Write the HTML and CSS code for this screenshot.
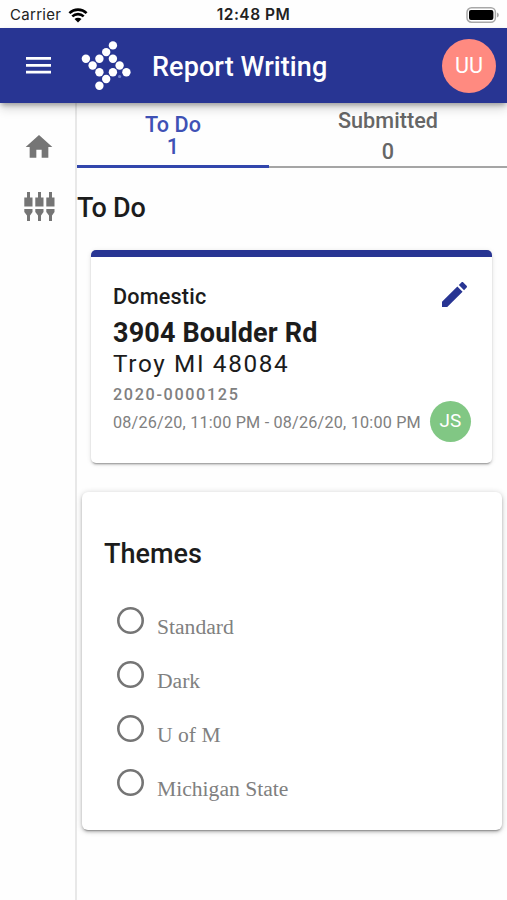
FILE: index.html
```
<!DOCTYPE html>
<html lang="en">

<head>
  <meta charset="utf-8">
  <title>Report Writing</title>
  <link rel="stylesheet" href="styles.css">
</head>

<body>
  <div class="status-bar">
    <div class="carrier">
      <span>Carrier</span>
      <svg class="wifi" viewBox="0 0 20 15" width="20" height="15">
        <path d="M1.4 5.1a12.4 12.4 0 0 1 17.2 0M4.3 8.4a8.2 8.2 0 0 1 11.4 0" fill="none" stroke="#000" stroke-width="2.6" />
        <path d="M10 14.6 6.5 11.1a5 5 0 0 1 7 0z" />
      </svg>
    </div>
    <div class="time">12:48 PM</div>
    <svg class="battery" viewBox="0 0 34 16" width="34" height="16">
      <rect x="1" y="0.8" width="28.4" height="14.4" rx="4.5" fill="#fff" stroke="#a8a8a8" stroke-width="1.5" />
      <rect x="3" y="3" width="24.4" height="10" rx="2" />
      <path d="M31 5.5a2.6 2.6 0 0 1 0 5z" fill="#a8a8a8" />
    </svg>
  </div>

  <header class="toolbar">
    <svg class="menu-icon" viewBox="0 0 25 17" width="25" height="17">
      <path d="M0 0h25v2.8H0zM0 6.9h25v2.8H0zM0 13.8h25v2.8H0z" fill="#fff" />
    </svg>
    <svg class="logo" viewBox="81 40 51 51" width="51" height="51">
      <g fill="#fff">
        <circle cx="112.9" cy="45.4" r="4.2" />
        <circle cx="106.2" cy="52.1" r="4.2" />
        <circle cx="99.4" cy="58.8" r="4.2" />
        <circle cx="85.9" cy="58.8" r="4.2" />
        <circle cx="92.6" cy="65.5" r="4.2" />
        <circle cx="112.9" cy="58.8" r="4.2" />
        <circle cx="119.6" cy="65.5" r="4.2" />
        <circle cx="126.4" cy="72.3" r="4.2" />
        <circle cx="99.4" cy="72.3" r="4.2" />
        <circle cx="112.9" cy="72.3" r="4.2" />
        <circle cx="106.2" cy="79" r="4.2" />
        <circle cx="99.4" cy="85.8" r="4.2" />
      </g>
      <circle cx="119.6" cy="76.5" r="1.6" fill="#6f7fc9" />
    </svg>
    <h1 class="page-title">Report Writing</h1>
    <div class="avatar">UU</div>
  </header>

  <div class="layout">
    <nav class="sidebar">
      <svg viewBox="0 0 24 24" width="32" height="32">
        <path d="M10 20v-6h4v6h5v-8h3L12 3 2 12h3v8z" />
      </svg>
      <svg viewBox="0 0 32 32" width="32" height="32">
        <path d="M4 1h3v5.500h2.500v9H1.300v-9H4zM15 1h3v5.500h2.500v9h-8.200v-9H15zM26 1h3v5.500h2.500v9h-8.200v-9H26z" />
        <path d="M1.300 18h8.200v3L7 24.500V30H4v-5.500L1.300 21zM12.300 18h8.200v3L18 24.500V30h-3v-5.500L12.300 21zM23.300 18h8.200v3L29 24.500V30h-3v-5.500L23.300 21z" />
      </svg>
    </nav>

    <main class="content">
      <div class="tabs">
        <div class="tab active">
          <span>To Do</span>
          <span>1</span>
        </div>
        <div class="tab">
          <span>Submitted</span>
          <span>0</span>
        </div>
      </div>

      <h2 class="section-title">To Do</h2>

      <div class="card report">
        <div class="report-header">
          <div class="report-type">Domestic</div>
          <svg class="edit-icon" viewBox="3 3 18 18" width="25" height="25">
            <path d="M3 17.250V21h3.750L17.810 9.940l-3.750-3.750L3 17.250zM20.710 7.040c.39-.39.39-1.020 0-1.410l-2.340-2.340c-.39-.39-1.020-.39-1.410 0l-1.830 1.830 3.750 3.750 1.830-1.830z" />
          </svg>
        </div>
        <div class="street">3904 Boulder Rd</div>
        <div class="city">Troy MI 48084</div>
        <div class="report-number">2020-0000125</div>
        <div class="report-footer">
          <div class="dates">08/26/20, 11:00 PM - 08/26/20, 10:00 PM</div>
          <div class="avatar small">JS</div>
        </div>
      </div>

      <div class="card themes">
        <h2 class="themes-title">Themes</h2>
        <label class="option"><input type="radio" name="theme"><span>Standard</span></label>
        <label class="option"><input type="radio" name="theme"><span>Dark</span></label>
        <label class="option"><input type="radio" name="theme"><span>U of M</span></label>
        <label class="option"><input type="radio" name="theme"><span>Michigan State</span></label>
      </div>
    </main>
  </div>
</body>

</html>
```

FILE: styles.css
```
* {
  box-sizing: border-box;
}

body {
  margin: 0;
  height: 900px;
  display: flex;
  flex-direction: column;
  overflow: hidden;
  background-color: #fefefe;
  color: #1c1c1c;
  font-family: Roboto, sans-serif;
}

h1,
h2 {
  margin: 0;
  font-weight: 500;
  font-size: 27px;
}

/* Phone status bar */
.status-bar {
  height: 28px;
  padding: 1px 7px 0 10px;
  display: grid;
  grid-template-columns: 1fr auto 1fr;
  align-items: center;
  font-family: Inter, sans-serif;
  font-size: 15px;
  line-height: 28px;
  color: #222;
}

.carrier {
  display: flex;
  align-items: center;
  gap: 7px;
  letter-spacing: 0.3px;
}

.time {
  margin-right: 3px;
  font-weight: 600;
  font-size: 15.5px;
  letter-spacing: 0.5px;
}

.battery {
  justify-self: end;
}

.toolbar {
  position: relative;
  height: 75px;
  flex: none;
  display: flex;
  align-items: center;
  padding: 0 11px 0 26px;
  background-color: #283593;
  color: #fff;
  box-shadow: 0 3px 5px -1px rgba(0, 0, 0, 0.3), 0 6px 10px rgba(0, 0, 0, 0.14);
}

.logo {
  margin-left: 30px;
}

.page-title {
  margin-left: 20px;
  padding-top: 2px;
  letter-spacing: 0.1px;
}

.avatar {
  width: 54px;
  height: 54px;
  margin-left: auto;
  border-radius: 50%;
  background-color: #ff8a80;
  color: #fff;
  font-size: 21.6px;
  line-height: 53px;
  text-align: center;
}

.avatar.small {
  width: 41px;
  height: 41px;
  background-color: #81c784;
  font-size: 19px;
  line-height: 40px;
}

.layout {
  flex: 1;
  display: flex;
}

.sidebar {
  width: 77px;
  padding: 28px 0 0 2px;
  border-right: 2px solid #e8e8e8;
  display: flex;
  flex-direction: column;
  align-items: center;
  gap: 28px;
  fill: #757575;
}

.content {
  flex: 1;
}

/* Tabs */
.tabs {
  display: grid;
  grid-template-columns: 192px 1fr;
  grid-template-rows: 65px;
}

.tab {
  height: 65px;
  display: flex;
  flex-direction: column;
  align-items: center;
  padding-top: 2px;
  border-bottom: 2px solid #a5a5a5;
  color: #666;
  font-size: 21.6px;
  font-weight: 500;
  line-height: 31px;
  letter-spacing: 0.05px;
}

.tab.active {
  padding-top: 11px;
  border-bottom: 3px solid #3246ac;
  color: #3f51b5;
  line-height: 22px;
}

.section-title {
  margin-top: 24px;
  line-height: 32px;
  letter-spacing: -0.2px;
}

.card {
  background-color: #fff;
  border-radius: 5px;
  box-shadow: 0 3px 1px -2px rgba(0, 0, 0, 0.2), 0 2px 2px rgba(0, 0, 0, 0.14), 0 1px 5px rgba(0, 0, 0, 0.12);
}

/* Report card */
.report {
  height: 213px;
  margin: 26px 15px 0 14px;
  padding: 25px 21px 0 22px;
  border-top: 7px solid #283593;
}

.report-header {
  display: flex;
  justify-content: space-between;
}

.report-type {
  font-size: 21.6px;
  font-weight: 500;
  line-height: 30px;
  letter-spacing: 0.2px;
}

.edit-icon {
  margin-right: 4px;
  fill: #283593;
}

.street {
  margin-top: 1px;
  font-size: 27px;
  font-weight: 700;
  line-height: 40px;
  letter-spacing: 0.15px;
}

.city {
  margin-top: -1px;
  font-size: 24.3px;
  line-height: 24px;
  letter-spacing: 1.65px;
}

.report-number {
  margin-top: 9px;
  color: #808080;
  font-size: 16.2px;
  font-weight: 500;
  line-height: 20px;
  letter-spacing: 1.65px;
}

.report-footer {
  display: flex;
  align-items: center;
  margin-top: -4px;
  color: #808080;
}

.dates {
  padding-top: 2px;
  font-size: 16.2px;
  letter-spacing: 0.2px;
  white-space: nowrap;
}

/* Theme picker */
.themes {
  height: 338px;
  margin: 29px 5px 0;
  padding: 46px 22px 0;
  border-radius: 6px;
  box-shadow: 0 3px 1px -2px rgba(0, 0, 0, 0.2), 0 2px 3px rgba(0, 0, 0, 0.2), 0 1px 6px rgba(0, 0, 0, 0.2);
}

.themes-title {
  margin-bottom: 23px;
  line-height: 32px;
}

.option {
  height: 54px;
  display: flex;
  align-items: center;
  padding-left: 13px;
  color: #808080;
  font-family: "Liberation Serif", serif;
  font-size: 21.6px;
}

.option input {
  appearance: none;
  width: 27px;
  height: 27px;
  margin: 0 13px 0 0;
  border-radius: 50%;
  box-shadow: inset 0 0 0 2.6px #757575;
}

.option span {
  padding-top: 14px;
}
```
